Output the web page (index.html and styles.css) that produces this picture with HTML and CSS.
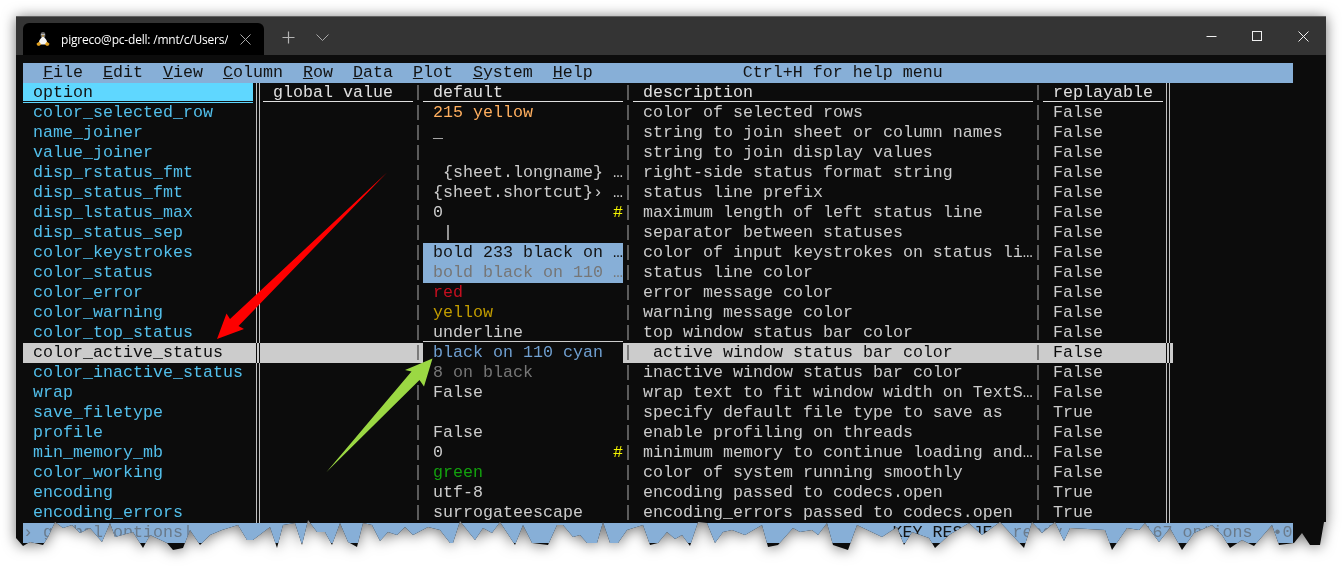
FILE: index.html
```html
<!DOCTYPE html>
<html lang="en">
<head>
<meta charset="utf-8">
<title>VisiData options</title>
<link rel="stylesheet" href="styles.css">
</head>
<body>
<div class="shadow">
<div class="window">
  <div class="titlebar">
    <div class="tab">
      <svg class="tux" width="14" height="14" viewBox="0 0 14 14"><ellipse cx="7" cy="3" rx="2.400" ry="3" fill="#6a6a6a"/><circle cx="6" cy="2.600" r=".7" fill="#fff"/><circle cx="8" cy="2.600" r=".7" fill="#fff"/><path d="M7 4.400C5.400 5.600 2.800 8 2.800 10.400 2.800 12 4.600 12.600 7 12.600s4.200-.6 4.200-2.200C11.200 8 8.600 5.600 7 4.400Z" fill="#f4f4f4"/><path d="M5.800 3.800 7 3.200l1.200.6L7 4.900Z" fill="#e0a020"/><path d="M.6 11.400 3.200 9.800l2 2.800L3 14 1 13.200Z" fill="#e0a020"/><path d="M13.400 11.400 10.800 9.800l-2 2.800L11 14l2-.8Z" fill="#e0a020"/></svg>
      <span class="tab-title">pigreco@pc-dell: /mnt/c/Users/</span>
      <svg class="tab-close" width="11" height="11" viewBox="0 0 11 11"><path d="M.5.5l10 10M10.500.5l-10 10" stroke="#a8a8a8" fill="none"/></svg>
    </div>
    <svg class="plus" width="13" height="13" viewBox="0 0 13 13"><path d="M6.500.5v12M.5 6.500h12" stroke="#b4b4b4" stroke-width="1.200" fill="none"/></svg>
    <svg class="chev" width="13" height="7" viewBox="0 0 13 7"><path d="M.5.5l6 6 6-6" stroke="#a8a8a8" fill="none"/></svg>
    <div class="winbtns">
      <div class="winbtn"><svg width="11" height="11" viewBox="0 0 11 11"><path d="M.5 5.500h10" stroke="#f0f0f0" fill="none"/></svg></div>
      <div class="winbtn"><svg width="11" height="11" viewBox="0 0 11 11"><rect x=".5" y=".5" width="9" height="9" stroke="#f0f0f0" fill="none"/></svg></div>
      <div class="winbtn"><svg width="11" height="11" viewBox="0 0 11 11"><path d="M.5.5l10 10M10.500.5l-10 10" stroke="#f0f0f0" fill="none"/></svg></div>
    </div>
  </div>
  <div class="term">
    <div class="bar menu">  <u>F</u>ile  <u>E</u>dit  <u>V</u>iew  <u>C</u>olumn  <u>R</u>ow  <u>D</u>ata  <u>P</u>lot  <u>S</u>ystem  <u>H</u>elp               Ctrl+H for help menu</div>

    <div class="row head">
      <div class="cell opt"><div class="ul">option</div></div><div class="dbl"></div>
      <div class="cell"><div class="ul">global value</div></div><div class="sep">|</div>
      <div class="cell"><div class="ul">default</div></div><div class="sep">|</div>
      <div class="cell"><div class="ul">description</div></div><div class="sep">|</div>
      <div class="cell"><div class="ul">replayable</div></div><div class="dbl"></div>
    </div>

    <div class="row"><div class="cell name">color_selected_row</div><div class="dbl"></div><div class="cell"></div><div class="sep">|</div><div class="cell c-orange">215 yellow</div><div class="sep">|</div><div class="cell">color of selected rows</div><div class="sep">|</div><div class="cell">False</div><div class="dbl"></div></div>
    <div class="row"><div class="cell name">name_joiner</div><div class="dbl"></div><div class="cell"></div><div class="sep">|</div><div class="cell">_</div><div class="sep">|</div><div class="cell">string to join sheet or column names</div><div class="sep">|</div><div class="cell">False</div><div class="dbl"></div></div>
    <div class="row"><div class="cell name">value_joiner</div><div class="dbl"></div><div class="cell"></div><div class="sep">|</div><div class="cell"></div><div class="sep">|</div><div class="cell">string to join display values</div><div class="sep">|</div><div class="cell">False</div><div class="dbl"></div></div>
    <div class="row"><div class="cell name">disp_rstatus_fmt</div><div class="dbl"></div><div class="cell"></div><div class="sep">|</div><div class="cell"> {sheet.longname} …</div><div class="sep">|</div><div class="cell">right-side status format string</div><div class="sep">|</div><div class="cell">False</div><div class="dbl"></div></div>
    <div class="row"><div class="cell name">disp_status_fmt</div><div class="dbl"></div><div class="cell"></div><div class="sep">|</div><div class="cell">{sheet.shortcut}› …</div><div class="sep">|</div><div class="cell">status line prefix</div><div class="sep">|</div><div class="cell">False</div><div class="dbl"></div></div>
    <div class="row"><div class="cell name">disp_lstatus_max</div><div class="dbl"></div><div class="cell"></div><div class="sep">|</div><div class="cell">0                 <span class="c-hash">#</span></div><div class="sep">|</div><div class="cell">maximum length of left status line</div><div class="sep">|</div><div class="cell">False</div><div class="dbl"></div></div>
    <div class="row"><div class="cell name">disp_status_sep</div><div class="dbl"></div><div class="cell"></div><div class="sep">|</div><div class="cell"> |</div><div class="sep">|</div><div class="cell">separator between statuses</div><div class="sep">|</div><div class="cell">False</div><div class="dbl"></div></div>
    <div class="row"><div class="cell name">color_keystrokes</div><div class="dbl"></div><div class="cell"></div><div class="sep">|</div><div class="cell c-blue">bold 233 black on …</div><div class="sep">|</div><div class="cell">color of input keystrokes on status li…</div><div class="sep">|</div><div class="cell">False</div><div class="dbl"></div></div>
    <div class="row"><div class="cell name">color_status</div><div class="dbl"></div><div class="cell"></div><div class="sep">|</div><div class="cell c-blue-dim">bold black on 110 …</div><div class="sep">|</div><div class="cell">status line color</div><div class="sep">|</div><div class="cell">False</div><div class="dbl"></div></div>
    <div class="row"><div class="cell name">color_error</div><div class="dbl"></div><div class="cell"></div><div class="sep">|</div><div class="cell c-red">red</div><div class="sep">|</div><div class="cell">error message color</div><div class="sep">|</div><div class="cell">False</div><div class="dbl"></div></div>
    <div class="row"><div class="cell name">color_warning</div><div class="dbl"></div><div class="cell"></div><div class="sep">|</div><div class="cell c-yellow">yellow</div><div class="sep">|</div><div class="cell">warning message color</div><div class="sep">|</div><div class="cell">False</div><div class="dbl"></div></div>
    <div class="row"><div class="cell name">color_top_status</div><div class="dbl"></div><div class="cell"></div><div class="sep">|</div><div class="cell"><div class="ul">underline</div></div><div class="sep">|</div><div class="cell">top window status bar color</div><div class="sep">|</div><div class="cell">False</div><div class="dbl"></div></div>
    <div class="row selected"><div class="cell">color_active_status</div><div class="dbl"></div><div class="cell"></div><div class="sep">|</div><div class="cell c-active">black on 110 cyan</div><div class="sep">|</div><div class="cell"> active window status bar color</div><div class="sep">|</div><div class="cell">False</div><div class="dbl"></div></div>
    <div class="row"><div class="cell name">color_inactive_status</div><div class="dbl"></div><div class="cell"></div><div class="sep">|</div><div class="cell c-dim">8 on black</div><div class="sep">|</div><div class="cell">inactive window status bar color</div><div class="sep">|</div><div class="cell">False</div><div class="dbl"></div></div>
    <div class="row"><div class="cell name">wrap</div><div class="dbl"></div><div class="cell"></div><div class="sep">|</div><div class="cell">False</div><div class="sep">|</div><div class="cell">wrap text to fit window width on TextS…</div><div class="sep">|</div><div class="cell">False</div><div class="dbl"></div></div>
    <div class="row"><div class="cell name">save_filetype</div><div class="dbl"></div><div class="cell"></div><div class="sep">|</div><div class="cell"></div><div class="sep">|</div><div class="cell">specify default file type to save as</div><div class="sep">|</div><div class="cell">True</div><div class="dbl"></div></div>
    <div class="row"><div class="cell name">profile</div><div class="dbl"></div><div class="cell"></div><div class="sep">|</div><div class="cell">False</div><div class="sep">|</div><div class="cell">enable profiling on threads</div><div class="sep">|</div><div class="cell">False</div><div class="dbl"></div></div>
    <div class="row"><div class="cell name">min_memory_mb</div><div class="dbl"></div><div class="cell"></div><div class="sep">|</div><div class="cell">0                 <span class="c-hash">#</span></div><div class="sep">|</div><div class="cell">minimum memory to continue loading and…</div><div class="sep">|</div><div class="cell">False</div><div class="dbl"></div></div>
    <div class="row"><div class="cell name">color_working</div><div class="dbl"></div><div class="cell"></div><div class="sep">|</div><div class="cell c-green">green</div><div class="sep">|</div><div class="cell">color of system running smoothly</div><div class="sep">|</div><div class="cell">False</div><div class="dbl"></div></div>
    <div class="row"><div class="cell name">encoding</div><div class="dbl"></div><div class="cell"></div><div class="sep">|</div><div class="cell">utf-8</div><div class="sep">|</div><div class="cell">encoding passed to codecs.open</div><div class="sep">|</div><div class="cell">True</div><div class="dbl"></div></div>
    <div class="row"><div class="cell name">encoding_errors</div><div class="dbl"></div><div class="cell"></div><div class="sep">|</div><div class="cell">surrogateescape</div><div class="sep">|</div><div class="cell">encoding_errors passed to codecs.open</div><div class="sep">|</div><div class="cell">True</div><div class="dbl"></div></div>

    <div class="bar status"><span class="st-dim">› global options|</span>                                                                      KEY RES JE  <span class="st-dim">ready</span>        <span class="st-dim">167 options  •0</span></div>
  </div>
  <svg class="arrows" viewBox="16 16 1310 535" width="1310" height="535">
    <polygon points="387,172.500 238.500,326 244,329 217,339 226.500,313.500 230,319" fill="#fe0000"/>
    <polygon points="432.500,358.500 424,386.500 419.500,380 326.500,472 411.500,371.500 405,370" fill="#9bd843"/>
  </svg>
</div>
</div>
</body>
</html>
```
FILE: styles.css
```css
html, body {
  margin: 0;
  height: 566px;
  overflow: hidden;
  background: #fff;
}

body {
  padding: 16px 16px 0;
  box-sizing: border-box;
}

.shadow {
  filter: drop-shadow(0 1px 7px rgba(0, 0, 0, 0.55));
}

.window {
  position: relative;
  width: 1310px;
  height: 535px;
  background: #0c0c0c;
  clip-path: polygon(0 522px,7px 530px,14px 526px,27px 529px,32px 521px,39px 506px,47px 512px,56px 509px,64px 517px,74px 512px,86px 526px,94px 507px,99px 521px,117px 516px,127px 532px,134px 519px,151px 527px,157px 534px,167px 532px,174px 514px,184px 529px,194px 519px,206px 514px,222px 509px,231px 524px,237px 524px,254px 511px,261px 532px,267px 509px,279px 507px,286px 529px,292px 504px,301px 516px,309px 516px,316px 529px,324px 507px,332px 526px,341px 531px,347px 507px,356px 509px,364px 525px,372px 516px,381px 519px,389px 511px,397px 519px,412px 511px,424px 514px,434px 527px,437px 527px,444px 505px,459px 524px,467px 512px,476px 517px,484px 506px,499px 529px,507px 509px,516px 527px,532px 529px,541px 509px,547px 509px,557px 521px,564px 519px,571px 527px,581px 527px,587px 506px,594px 527px,602px 527px,611px 514px,627px 509px,634px 529px,642px 527px,651px 516px,659px 523px,666px 519px,674px 530px,682px 506px,691px 507px,699px 527px,707px 516px,716px 514px,729px 519px,746px 509px,752px 531px,762px 529px,777px 512px,784px 516px,796px 514px,802px 519px,811px 507px,817px 529px,832px 534px,841px 509px,866px 521px,881px 511px,888px 529px,896px 516px,913px 522px,919px 532px,933px 519px,953px 507px,966px 519px,984px 506px,1008px 532px,1016px 506px,1026px 517px,1039px 506px,1048px 525px,1054px 512px,1089px 514px,1096px 534px,1111px 512px,1123px 514px,1129px 507px,1143px 526px,1154px 512px,1166px 534px,1178px 517px,1196px 509px,1206px 519px,1214px 532px,1226px 524px,1238px 530px,1256px 509px,1263px 529px,1278px 527px,1286px 517px,1294px 529px,1304px 529px,1308px 506px,1310px 506px,1310px 0,0 0);
}

.titlebar {
  display: flex;
  align-items: flex-end;
  height: 38px;
  padding-left: 7px;
  background: #343434;
  border-top: 1px solid #626262;
}

.tab {
  display: flex;
  align-items: center;
  box-sizing: border-box;
  width: 241px;
  height: 32px;
  padding-left: 13px;
  background: #000;
  border-radius: 6px 6px 0 0;
}

.tux {
  flex: none;
}

.tab-title {
  width: 167px;
  margin-left: 11px;
  overflow: hidden;
  white-space: nowrap;
  color: #fff;
  font: 12px "Open Sans", sans-serif;
  letter-spacing: -0.2px;
}

.tab-close {
  margin-left: 12px;
}

.plus {
  margin: 0 0 11px 18px;
}

.chev {
  margin: 0 0 14px 21px;
}

.winbtns {
  display: flex;
  align-self: stretch;
  margin-left: auto;
}

.winbtn {
  display: flex;
  align-items: center;
  justify-content: center;
  width: 46px;
}

.term {
  padding: 8px 0 0 7px;
  color: #ccc;
  font: 16.667px/20px "Liberation Mono", monospace;
}

.bar {
  width: 1270px;
  height: 20px;
  background: #87afd7;
  color: #121212;
  white-space: pre;
}

.row {
  display: grid;
  grid-template-columns: 230px 10px 150px 10px 200px 10px 400px 10px 120px 10px;
  width: 1150px;
  height: 20px;
}

.cell {
  height: 20px;
  padding-left: 10px;
  box-sizing: border-box;
  overflow: hidden;
  white-space: pre;
}

.cell:has(.ul) {
  padding-left: 0;
}

.ul {
  box-sizing: border-box;
  height: 19px;
  padding-left: 10px;
  border-bottom: 1px solid currentColor;
}

.opt {
  background: #5fd7ff;
  color: #121212;
}

.head {
  color: #e0e0e0;
}

.sep {
  width: 10px;
  height: 20px;
  color: #808080;
}

.dbl {
  box-sizing: border-box;
  width: 4px;
  margin-left: 3px;
  border-left: 1px solid #c0c0c0;
  border-right: 1px solid #c0c0c0;
}

.name {
  color: #52bfeb;
}

.c-orange { color: #ffaf5f; }
.c-red { color: #c50f1f; }
.c-yellow { color: #c19c00; }
.c-green { color: #13a10e; }
.c-dim { color: #767676; }
.c-hash { color: #f5f500; }
.c-blue { background: #87afd7; color: #121212; }
.c-blue-dim { background: #87afd7; color: #767676; }
.c-active { background: #0c0c0c; color: #6f9fd0; }

.selected {
  background: #ccc;
  color: #0c0c0c;
}

.selected .sep {
  color: #555;
}

.selected .dbl {
  border-color: #0c0c0c;
}

.st-dim {
  color: #6a7a8a;
}

.arrows {
  position: absolute;
  top: 0;
  left: 0;
}
```
